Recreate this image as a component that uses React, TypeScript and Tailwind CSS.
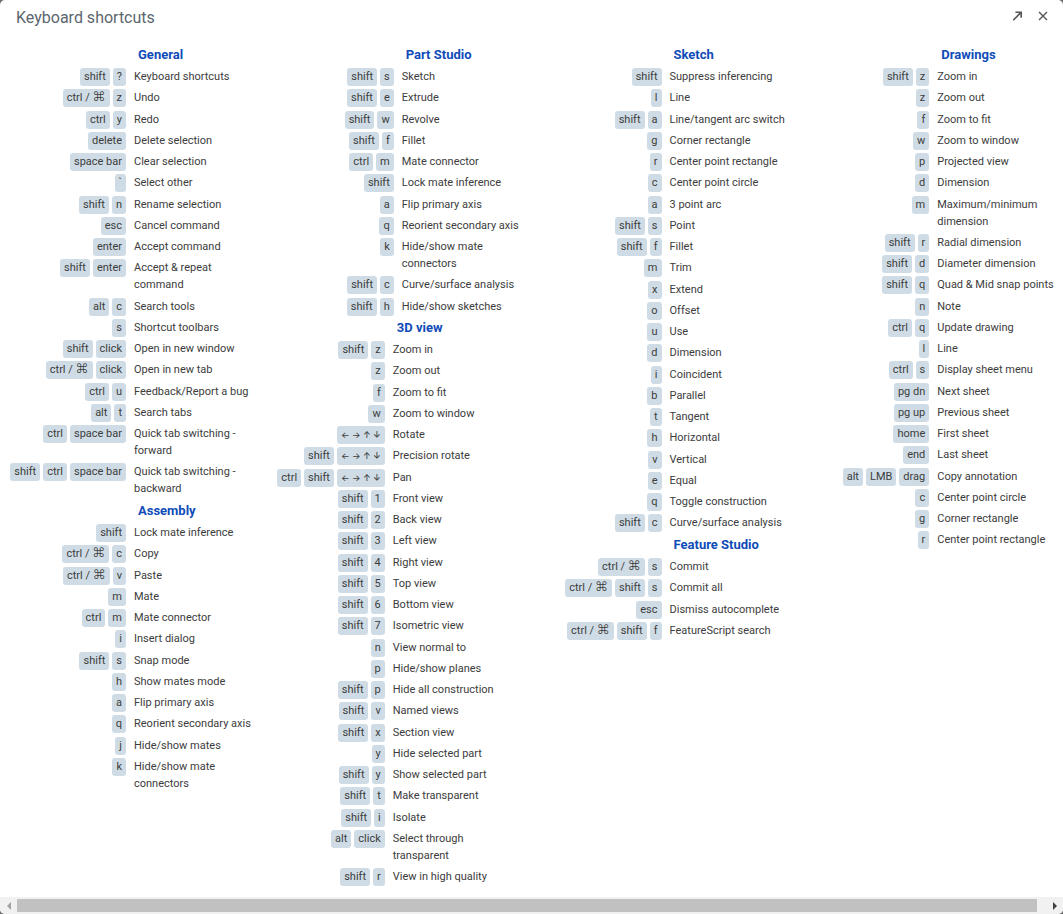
import React, { useRef } from "react";

type Shortcut = [keys: string[], action: string];

interface Section {
  title: string;
  narrow?: boolean;
  rows: Shortcut[];
}

const CTRL = "ctrl / ⌘";
const ARROWS = "← → ↑ ↓";

const columns: Section[][] = [
  [
    {
      title: "General",
      rows: [
        [["shift", "?"], "Keyboard shortcuts"],
        [[CTRL, "z"], "Undo"],
        [["ctrl", "y"], "Redo"],
        [["delete"], "Delete selection"],
        [["space bar"], "Clear selection"],
        [["`"], "Select other"],
        [["shift", "n"], "Rename selection"],
        [["esc"], "Cancel command"],
        [["enter"], "Accept command"],
        [["shift", "enter"], "Accept & repeat command"],
        [["alt", "c"], "Search tools"],
        [["s"], "Shortcut toolbars"],
        [["shift", "click"], "Open in new window"],
        [[CTRL, "click"], "Open in new tab"],
        [["ctrl", "u"], "Feedback/Report a bug"],
        [["alt", "t"], "Search tabs"],
        [["ctrl", "space bar"], "Quick tab switching - forward"],
        [["shift", "ctrl", "space bar"], "Quick tab switching - backward"],
      ],
    },
    {
      title: "Assembly",
      rows: [
        [["shift"], "Lock mate inference"],
        [[CTRL, "c"], "Copy"],
        [[CTRL, "v"], "Paste"],
        [["m"], "Mate"],
        [["ctrl", "m"], "Mate connector"],
        [["i"], "Insert dialog"],
        [["shift", "s"], "Snap mode"],
        [["h"], "Show mates mode"],
        [["a"], "Flip primary axis"],
        [["q"], "Reorient secondary axis"],
        [["j"], "Hide/show mates"],
        [["k"], "Hide/show mate connectors"],
      ],
    },
  ],
  [
    {
      title: "Part Studio",
      rows: [
        [["shift", "s"], "Sketch"],
        [["shift", "e"], "Extrude"],
        [["shift", "w"], "Revolve"],
        [["shift", "f"], "Fillet"],
        [["ctrl", "m"], "Mate connector"],
        [["shift"], "Lock mate inference"],
        [["a"], "Flip primary axis"],
        [["q"], "Reorient secondary axis"],
        [["k"], "Hide/show mate connectors"],
        [["shift", "c"], "Curve/surface analysis"],
        [["shift", "h"], "Hide/show sketches"],
      ],
    },
    {
      title: "3D view",
      narrow: true,
      rows: [
        [["shift", "z"], "Zoom in"],
        [["z"], "Zoom out"],
        [["f"], "Zoom to fit"],
        [["w"], "Zoom to window"],
        [[ARROWS], "Rotate"],
        [["shift", ARROWS], "Precision rotate"],
        [["ctrl", "shift", ARROWS], "Pan"],
        [["shift", "1"], "Front view"],
        [["shift", "2"], "Back view"],
        [["shift", "3"], "Left view"],
        [["shift", "4"], "Right view"],
        [["shift", "5"], "Top view"],
        [["shift", "6"], "Bottom view"],
        [["shift", "7"], "Isometric view"],
        [["n"], "View normal to"],
        [["p"], "Hide/show planes"],
        [["shift", "p"], "Hide all construction"],
        [["shift", "v"], "Named views"],
        [["shift", "x"], "Section view"],
        [["y"], "Hide selected part"],
        [["shift", "y"], "Show selected part"],
        [["shift", "t"], "Make transparent"],
        [["shift", "i"], "Isolate"],
        [["alt", "click"], "Select through transparent"],
        [["shift", "r"], "View in high quality"],
      ],
    },
  ],
  [
    {
      title: "Sketch",
      rows: [
        [["shift"], "Suppress inferencing"],
        [["l"], "Line"],
        [["shift", "a"], "Line/tangent arc switch"],
        [["g"], "Corner rectangle"],
        [["r"], "Center point rectangle"],
        [["c"], "Center point circle"],
        [["a"], "3 point arc"],
        [["shift", "s"], "Point"],
        [["shift", "f"], "Fillet"],
        [["m"], "Trim"],
        [["x"], "Extend"],
        [["o"], "Offset"],
        [["u"], "Use"],
        [["d"], "Dimension"],
        [["i"], "Coincident"],
        [["b"], "Parallel"],
        [["t"], "Tangent"],
        [["h"], "Horizontal"],
        [["v"], "Vertical"],
        [["e"], "Equal"],
        [["q"], "Toggle construction"],
        [["shift", "c"], "Curve/surface analysis"],
      ],
    },
    {
      title: "Feature Studio",
      rows: [
        [[CTRL, "s"], "Commit"],
        [[CTRL, "shift", "s"], "Commit all"],
        [["esc"], "Dismiss autocomplete"],
        [[CTRL, "shift", "f"], "FeatureScript search"],
      ],
    },
  ],
  [
    {
      title: "Drawings",
      rows: [
        [["shift", "z"], "Zoom in"],
        [["z"], "Zoom out"],
        [["f"], "Zoom to fit"],
        [["w"], "Zoom to window"],
        [["p"], "Projected view"],
        [["d"], "Dimension"],
        [["m"], "Maximum/minimum dimension"],
        [["shift", "r"], "Radial dimension"],
        [["shift", "d"], "Diameter dimension"],
        [["shift", "q"], "Quad & Mid snap points"],
        [["n"], "Note"],
        [["ctrl", "q"], "Update drawing"],
        [["l"], "Line"],
        [["ctrl", "s"], "Display sheet menu"],
        [["pg dn"], "Next sheet"],
        [["pg up"], "Previous sheet"],
        [["home"], "First sheet"],
        [["end"], "Last sheet"],
        [["alt", "LMB", "drag"], "Copy annotation"],
        [["c"], "Center point circle"],
        [["g"], "Corner rectangle"],
        [["r"], "Center point rectangle"],
      ],
    },
  ],
];

function Key({ label }: { label: string }) {
  if (label === ARROWS) {
    return (
      <kbd className="h-[18px] rounded-[3px] bg-[#cfdce6] px-1 font-['Inter',sans-serif] text-[9px] leading-[18px] font-medium whitespace-nowrap">
        {label}
      </kbd>
    );
  }
  return (
    <kbd className="h-[18px] rounded-[3px] bg-[#cfdce6] px-1 font-['Roboto',sans-serif] leading-[18px] whitespace-nowrap">
      {label === CTRL ? (
        <>
          ctrl / <span className="font-['Inter',sans-serif] text-[13px] leading-none font-light">⌘</span>
        </>
      ) : (
        label
      )}
    </kbd>
  );
}

function ShortcutSection({ title, narrow, rows }: Section) {
  return (
    <section>
      <h2
        className={
          narrow
            ? "pl-[129px] text-[13px] leading-[22px] font-bold text-[#0f4cb8]"
            : "pl-[138px] text-[13px] leading-[22px] font-bold text-[#0f4cb8]"
        }
      >
        {title}
      </h2>
      <table aria-label={title} className="w-full table-fixed border-collapse">
        <colgroup>
          <col className={narrow ? "w-[117px]" : "w-[126px]"} />
          <col />
        </colgroup>
        <tbody>
          {rows.map(([keys, action]) => (
            <tr key={keys.join("+") + action} className="group align-top">
              <td className="pt-[2px]">
                <div className="flex justify-end gap-[3px]">
                  {keys.map((k) => (
                    <Key key={k} label={k} />
                  ))}
                </div>
              </td>
              <td className="py-[2px] pl-2 leading-[17px] group-nth-[4n+2]:pb-[3px]">
                <div className="max-w-[120px]">{action}</div>
              </td>
            </tr>
          ))}
        </tbody>
      </table>
    </section>
  );
}

export default function App() {
  const scroller = useRef<HTMLDivElement>(null);
  const scroll = (left: number) => scroller.current?.scrollBy({ left });

  return (
    <div className="min-h-screen bg-[#6b6b6b] font-['Roboto',sans-serif] text-[11px] text-[#3c3c3c]">
      <div
        role="dialog"
        aria-labelledby="dialog-title"
        className="flex min-h-screen flex-col overflow-hidden rounded-[5px] bg-white"
      >
        <header className="flex h-9 items-center justify-between pr-[13px] pl-4">
          <h1 id="dialog-title" className="text-[16px] leading-9 text-[#5b666e]">
            Keyboard shortcuts
          </h1>
          <div className="flex items-center gap-3 pb-1 text-[#555555]">
            <button type="button" aria-label="Open in new window" className="p-px">
              <svg width="12" height="12" viewBox="0 0 12 12" fill="none" stroke="currentColor" strokeWidth="1.6">
                <path d="M2.2 10.2 10 2.4M4.4 2.2h5.8v5.6" />
              </svg>
            </button>
            <button type="button" aria-label="Close" className="p-px">
              <svg width="12" height="12" viewBox="0 0 12 12" fill="none" stroke="currentColor" strokeWidth="1.4">
                <path d="m2 2 8 8M10 2l-8 8" />
              </svg>
            </button>
          </div>
        </header>

        <main ref={scroller} className="flex-1 overflow-x-auto pt-2 [scrollbar-width:none]">
          <div className="grid min-w-[1071px] grid-cols-4">
            {columns.map((sections, i) => (
              <div key={i}>
                {sections.map((s) => (
                  <ShortcutSection key={s.title} {...s} />
                ))}
              </div>
            ))}
          </div>
        </main>

        <footer className="flex h-[17px] items-center bg-[#f1f1f1]">
          <button
            type="button"
            aria-label="Scroll left"
            onClick={() => scroll(-40)}
            className="flex w-[17px] justify-center text-[#a3a3a3]"
          >
            <svg width="8" height="8" viewBox="0 0 8 8" fill="currentColor">
              <path d="M6 0v8L2 4z" />
            </svg>
          </button>
          <div className="flex-1 pr-[9px]">
            <div className="h-[13px] bg-[#c1c1c1]" />
          </div>
          <button
            type="button"
            aria-label="Scroll right"
            onClick={() => scroll(40)}
            className="flex w-[17px] justify-center text-[#404040]"
          >
            <svg width="8" height="8" viewBox="0 0 8 8" fill="currentColor">
              <path d="M2 0v8l4-4z" />
            </svg>
          </button>
        </footer>
      </div>
    </div>
  );
}
